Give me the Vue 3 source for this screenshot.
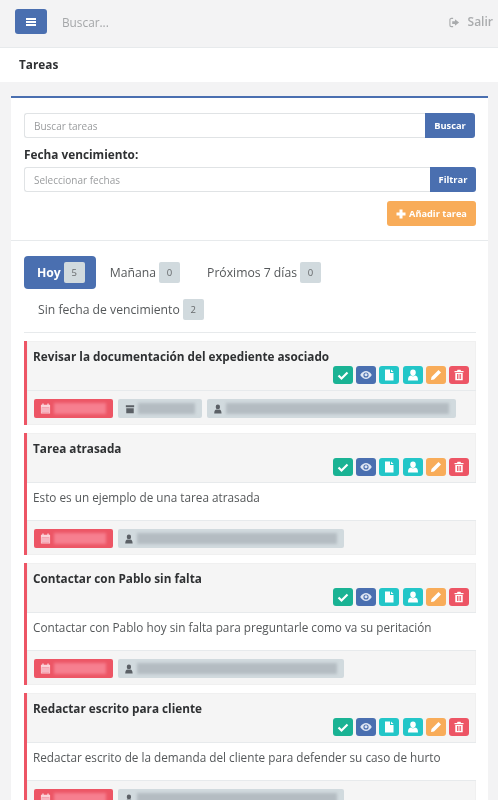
<script setup>
const actions = [
  { cls: 'green', icon: 'check' },
  { cls: 'blue', icon: 'eye' },
  { cls: 'teal', icon: 'file' },
  { cls: 'teal', icon: 'user' },
  { cls: 'orange', icon: 'pencil' },
  { cls: 'red', icon: 'trash' }
]
const tasks = [
  { title: 'Revisar la documentación del expediente asociado', body: '', archive: true, person: 229, chipWidth: 249 },
  { title: 'Tarea atrasada', body: 'Esto es un ejemplo de una tarea atrasada', archive: false, person: 203, chipWidth: 226 },
  { title: 'Contactar con Pablo sin falta', body: 'Contactar con Pablo hoy sin falta para preguntarle como va su peritación', archive: false, person: 203, chipWidth: 226 },
  { title: 'Redactar escrito para cliente', body: 'Redactar escrito de la demanda del cliente para defender su caso de hurto', archive: false, person: 203, chipWidth: 226 }
]
</script>

<template>
  <div class="page">
    <header class="topbar">
      <button class="menu" aria-label="Menú">
        <svg viewBox="0 0 12 12" width="12" height="12"><path d="M1 2h10v2H1zM1 5h10v2H1zM1 8h10v2H1z" fill="#fff" /></svg>
      </button>
      <span class="top-search">Buscar...</span>
      <span class="logout">
        <svg viewBox="0 0 12 12" width="11" height="11"><path d="M4.5 1.5H2.5a1.5 1.5 0 0 0-1.5 1.5v6a1.5 1.5 0 0 0 1.500 1.500h2" fill="none" stroke="#a9abad" stroke-width="1.200" /><path d="M6.500 2.500 11 6l-4.500 3.500V7.500H3.500v-3h3z" fill="#a9abad" /></svg>
        <span>Salir</span>
      </span>
    </header>

    <div class="heading">Tareas</div>

    <main class="content">
      <section class="box">
        <div class="filters">
          <div class="group first">
            <div class="field">Buscar tareas</div>
            <button class="addon search">Buscar</button>
          </div>
          <label class="label">Fecha vencimiento:</label>
          <div class="group">
            <div class="field">Seleccionar fechas</div>
            <button class="addon filter">Filtrar</button>
          </div>
          <div class="add-row">
            <button class="add">
              <svg viewBox="0 0 10 10" width="10" height="10"><path d="M3.500 0.500h3v3h3v3h-3v3h-3v-3h-3v-3h3z" fill="#fff" /></svg>
              Añadir tarea
            </button>
          </div>
        </div>

        <div class="list">
          <nav class="tabs">
            <a class="tab active">Hoy <b class="count">5</b></a>
            <a class="tab">Mañana <b class="count">0</b></a>
            <a class="tab">Próximos 7 días <b class="count">0</b></a>
            <a class="tab">Sin fecha de vencimiento <b class="count">2</b></a>
          </nav>
          <hr class="rule" />

          <article v-for="task in tasks" :key="task.title" class="task">
            <div class="task-head">
              <h3>{{ task.title }}</h3>
              <div class="actions">
                <span v-for="(a, i) in actions" :key="i" class="act" :class="a.cls">
                  <svg viewBox="0 0 12 12" width="12" height="12">
                    <path v-if="a.icon === 'check'" d="M1.500 6.500 4.500 9.500 10.500 3.500" fill="none" stroke="#fff" stroke-width="2.200" />
                    <template v-else-if="a.icon === 'eye'">
                      <path d="M0.200 6C2 3.200 4 2.100 6 2.100S10 3.200 11.800 6C10 8.800 8 9.900 6 9.900S2 8.800 0.200 6Z" fill="#dfe6f3" />
                      <circle cx="6" cy="6" r="2.600" fill="#4a6fb0" />
                      <circle cx="6" cy="5.800" r="1.500" fill="#dfe6f3" />
                    </template>
                    <path v-else-if="a.icon === 'file'" d="M2 0.500h5v3.500h3.500v7.500H2zM8 0.500l2.500 2.500H8z" fill="#fff" />
                    <path v-else-if="a.icon === 'user'" d="M6 0.500a2.800 3.200 0 0 1 2.800 3.200C8.800 5.500 7.500 7 6 7S3.200 5.500 3.200 3.700A2.800 3.200 0 0 1 6 0.500ZM3.800 6.500C4.500 7.400 7.500 7.400 8.200 6.500 10 6.800 11 8 11 11.500H1C1 8 2 6.800 3.800 6.500Z" fill="#fff" />
                    <path v-else-if="a.icon === 'pencil'" d="M8.500 1 11 3.500 4 10.500 1 11l.500-3z" fill="#fff" />
                    <path v-else d="M4.500 0.800h3l.500 1.200h2.500v1.200h-9V2H4zM2.300 4h7.400v7.200H2.300zM4 5v5h.900V5zM5.600 5v5h.900V5zM7.200 5v5h.900V5z" fill="#fff" fill-rule="evenodd" />
                  </svg>
                </span>
              </div>
            </div>
            <div v-if="task.body" class="task-body">{{ task.body }}</div>
            <div class="task-foot">
              <span class="chip danger">
                <svg viewBox="0 0 12 12" width="11" height="11"><path d="M2.500 0.500h1.500v1.500h4V0.500h1.500v1.500H11v9.500H1V2h1.500zM2 4.500v6h8v-6z" fill="#fbd3da" /><path d="M2 4.500h8v6H2z" fill="#f7b6c2" /></svg>
                <span class="smear light"></span>
              </span>
              <span v-if="task.archive" class="chip">
                <svg viewBox="0 0 12 12" width="10" height="10"><path d="M1 1.500h10v2.500H1zM1.500 5h9v6h-9z" fill="#5b6066" /></svg>
                <span class="smear archive"></span>
              </span>
              <span class="chip person" :style="{ width: task.chipWidth + 'px' }">
                <svg viewBox="0 0 12 12" width="10" height="10"><path d="M6 0.500a2.500 2.800 0 0 1 0 6 2.500 2.800 0 0 1 0-6ZM1.500 11.500c0-3.300 1.200-4.600 2.800-4.800.9.700 2.500.7 3.400 0 1.600.2 2.800 1.500 2.800 4.800z" fill="#5b6066" /></svg>
                <span class="smear" :style="{ width: task.person + 'px' }"></span>
              </span>
            </div>
          </article>
        </div>
      </section>
    </main>
  </div>
</template>

<style>
html, body { margin: 0; background: #f3f3f4; }
</style>

<style scoped>
.page {
  height: 800px;
  overflow: hidden;
  background: #f3f3f4;
  font-family: "Open Sans", "Noto Sans", sans-serif;
  color: #676a6c;
  filter: blur(0.4px);
}
.topbar {
  height: 48px;
  box-sizing: border-box;
  border-bottom: 1px solid #e7eaec;
  display: flex;
  align-items: flex-start;
  padding: 9px 5px 0 15px;
}
.menu {
  width: 32px;
  height: 25px;
  padding: 0;
  border: 0;
  border-radius: 3px;
  background: #4a6fb0;
  display: flex;
  align-items: center;
  justify-content: center;
}
.top-search { margin: 5px 0 0 15px; font-size: 11.800px; color: #a4a6a8; }
.logout {
  margin: 4px 0 0 auto;
  display: flex;
  align-items: center;
  gap: 8px;
  font-size: 12px;
  font-weight: 600;
  color: #a9abad;
}
.logout svg { margin-top: 1px; }
.heading {
  height: 34px;
  padding-left: 19px;
  background: #fff;
  font-size: 11.800px;
  font-weight: 700;
  line-height: 32px;
  color: #2f3133;
}
.content { padding: 14px 10px 0 11px; }
.box {
  background: #fff;
  border-top: 2px solid #4a6fb0;
}
.filters {
  padding: 15px 12px 14px 13px;
  border-bottom: 1px solid #e7eaec;
}
.group { display: flex; height: 25px; }
.group.first { margin-right: 1px; }
.field {
  flex: 1;
  border: 1px solid #e0e3e5;
  border-right: 0;
  border-radius: 3px 0 0 3px;
  font-size: 10px;
  line-height: 24px;
  padding-left: 9px;
  color: #9a9c9e;
}
.addon {
  border: 0;
  padding: 0;
  background: #4a6fb0;
  color: #fff;
  font: 700 9.300px "Open Sans", sans-serif;
  border-radius: 0 3px 3px 0;
}
.search { width: 50px; }
.filter { width: 46px; }
.label {
  display: block;
  margin: 9px 0 5px;
  font-size: 11.800px;
  font-weight: 700;
  line-height: 15px;
  color: #2f3133;
}
.add-row { display: flex; justify-content: flex-end; margin: 9px 0 0; }
.add {
  width: 89px;
  height: 25px;
  padding: 0;
  border: 0;
  border-radius: 3px;
  background: #f8ac59;
  color: #fff;
  font: 700 9.200px "Open Sans", sans-serif;
  display: flex;
  align-items: center;
  justify-content: center;
  gap: 3px;
}
.list { padding: 15px 12px 0 13px; }
.tabs {
  display: flex;
  flex-wrap: wrap;
  align-items: center;
  gap: 8px 0;
  font-size: 12.200px;
  font-weight: 400;
  color: #55585a;
}
.tab {
  display: flex;
  align-items: center;
  height: 33px;
  padding: 0 15px 0 14px;
  border-radius: 4px;
  gap: 3px;
  white-space: nowrap;
}
.tab:nth-child(3) { padding-left: 12px; }
.tab:nth-child(4) { height: 24px; }
.tab.active {
  background: #4a6fb0;
  color: #fff;
  font-weight: 700;
  padding: 0 11px 0 13px;
}
.count {
  width: 21px;
  height: 21px;
  border-radius: 2px;
  background: #d1dade;
  color: #66696b;
  font-size: 9.500px;
  font-weight: 400;
  line-height: 21px;
  text-align: center;
}
.rule { margin: 11px 0 8px; border: 0; border-top: 1px solid #e7eaec; }
.task {
  margin-bottom: 8px;
  border-left: 3px solid #ed5565;
  background: #f5f5f5;
  box-shadow: 0 0 0 1px #f0f0f0 inset;
}
.task-head {
  padding: 7px 7px 6.500px 6px;
  border-bottom: 1px solid #e7eaec;
}
h3 {
  margin: 0 0 1.500px;
  font-size: 11.750px;
  font-weight: 700;
  line-height: 16px;
  color: #2f3133;
}
.actions { display: flex; justify-content: flex-end; gap: 3.200px; height: 18px; }
.act {
  width: 20px;
  height: 18px;
  border-radius: 3px;
  display: flex;
  align-items: center;
  justify-content: center;
}
.green { background: #1ab394; }
.blue { background: #4a6fb0; }
.teal { background: #23c6c8; }
.orange { background: #f8ac59; }
.red { background: #ed5565; }
.task-body {
  height: 37px;
  padding-left: 6px;
  background: #fff;
  border-bottom: 1px solid #e7eaec;
  font-size: 11.750px;
  line-height: 28px;
  color: #55585a;
  white-space: nowrap;
}
.task-foot {
  display: flex;
  gap: 5px;
  height: 34px;
  padding: 8px 0 0 7px;
  box-sizing: border-box;
}
.chip {
  height: 19px;
  padding: 0 7px;
  box-sizing: border-box;
  border-radius: 2px;
  background: #d1dade;
  display: flex;
  align-items: center;
  gap: 3px;
  overflow: hidden;
}
.chip.danger { width: 79px; background: #ed5565; padding-left: 6px; }
.chip.person { padding-left: 6px; }
.smear {
  display: block;
  height: 11px;
  width: 50px;
  background: #b4bcc2;
  filter: blur(1.500px);
}
.smear.light { width: 52px; background: #f67f8f; }
.smear.archive { width: 57px; }
</style>
